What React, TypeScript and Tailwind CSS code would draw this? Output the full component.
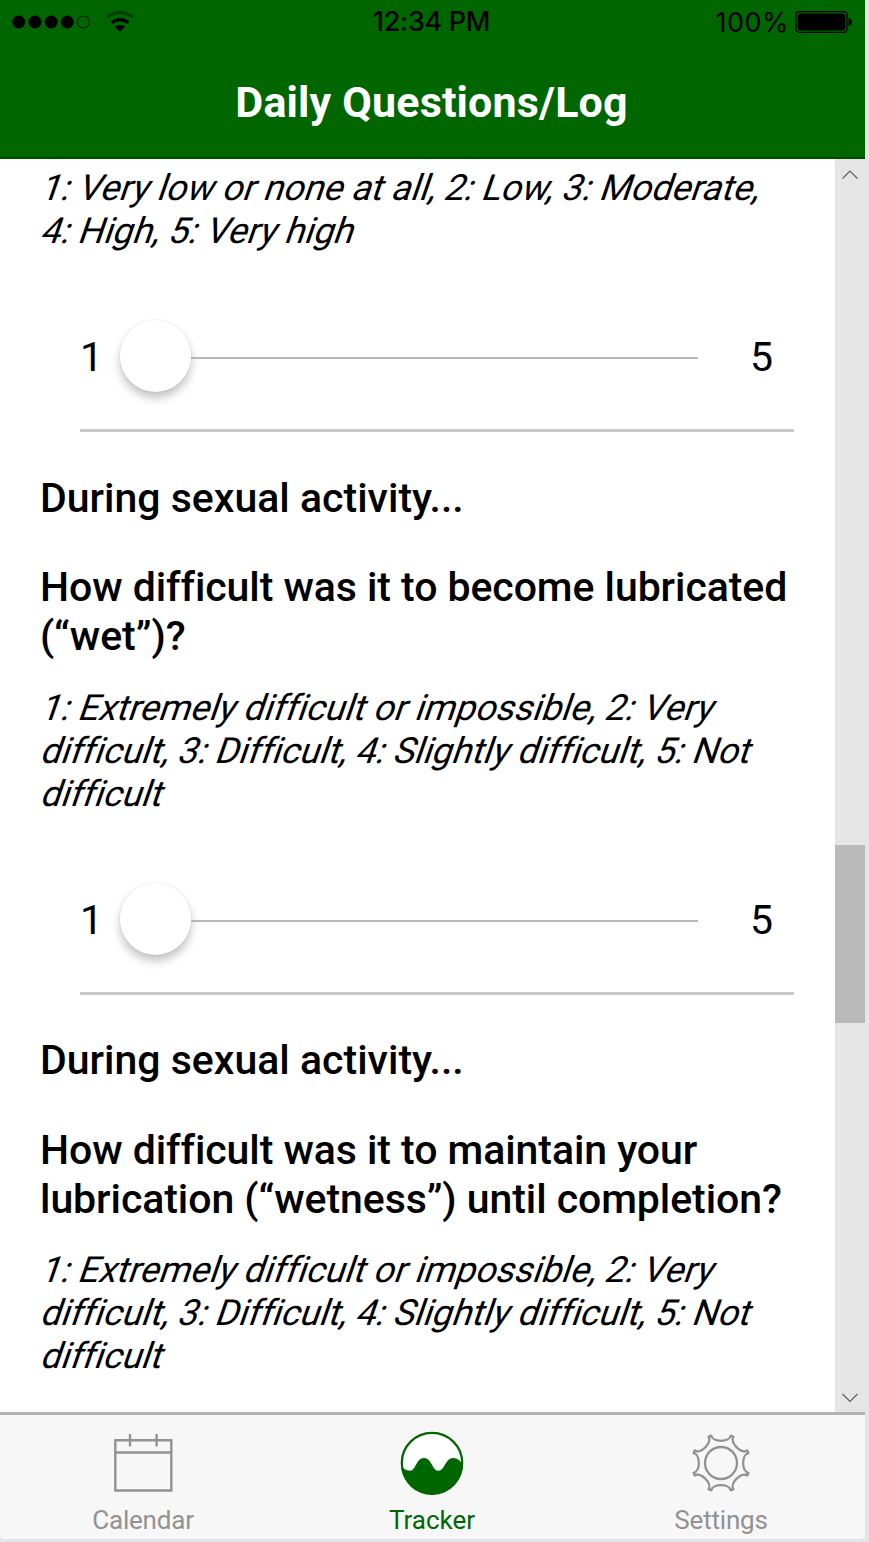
import React from 'react';

function StatusBar() {
  return (
    <div className="grid h-[44px] grid-cols-3 items-start text-black">
      <svg width="140" height="44" viewBox="0 0 140 44">
        <circle cx="18.8" cy="22" r="6.5" />
        <circle cx="35" cy="22" r="6.5" />
        <circle cx="51.2" cy="22" r="6.5" />
        <circle cx="67.3" cy="22" r="6.5" />
        <circle cx="83.4" cy="22" r="6" fill="none" stroke="#002800" strokeWidth="1.2" />
        <path d="M106.8 17.3 Q120 7.3 133.2 17.3" fill="none" stroke="#003f00" strokeWidth="3.2" />
        <path d="M111.6 22.6 Q120 16.2 128.4 22.6" fill="none" stroke="#000" strokeWidth="3.4" />
        <path d="M114.8 26.6 Q120 23.2 125.2 26.6 L120 31.8 Z" />
      </svg>
      <span className="mt-[5px] pr-[2px] text-center font-['Inter'] text-[27px] font-medium leading-[34px] tracking-[-0.3px] whitespace-nowrap">
        12:34 PM
      </span>
      <div className="flex justify-end pr-[12px]">
        <span className="mt-[6px] mr-[6px] font-['Inter'] text-[27px] leading-[34px] tracking-[0.5px]">100%</span>
        <svg width="58" height="44" viewBox="0 0 58 44">
          <rect x="1" y="11.7" width="51" height="20.6" rx="3" fill="none" stroke="#000" strokeWidth="1.2" />
          <rect x="2.7" y="13.5" width="47.6" height="17" rx="2.5" />
          <path d="M53.5 18 Q57 18.5 57 22 Q57 25.500 53.500 26 Z" />
        </svg>
      </div>
    </div>
  );
}

function Hint({ lines }: { lines: string[] }) {
  return (
    <div className="ml-[43px] text-[36px] leading-[43px] tracking-[-0.1px] [font-variant-ligatures:none]">
      {lines.map((line) => (
        <div key={line} className="w-max -skew-x-[19deg] whitespace-nowrap">{line}</div>
      ))}
    </div>
  );
}

function Scale() {
  return (
    <div className="ml-[80px] flex h-[149px] w-[714px] items-center border-b-[3px] border-[#c8c7cc] text-[41px]">
      <span className="mt-[4px] w-[40px]">1</span>
      <div className="flex w-[578px] items-center">
        <div className="h-[72px] w-[71px] shrink-0 rounded-full bg-white shadow-[0_0_0_1px_rgba(0,0,0,0.03),0_6px_10px_rgba(0,0,0,0.24)]" />
        <div className="mt-[4px] h-[2px] grow bg-[#b7b7b7]" />
      </div>
      <span className="mt-[4px] ml-[52px]">5</span>
    </div>
  );
}

function Question({ lines }: { lines: string[] }) {
  return (
    <div className="ml-[40px] text-[41px] font-medium leading-[49px] tracking-[-0.07px] [font-variant-ligatures:none]">
      <div className="pb-[40.5px] tracking-[0px]">During sexual activity...</div>
      {lines.map((line) => (
        <div key={line} className="whitespace-nowrap">{line}</div>
      ))}
    </div>
  );
}

function gearPath() {
  const turn = (x: number, y: number, k: number) => {
    const a = (k * Math.PI) / 4;
    return `${(x * Math.cos(a) - y * Math.sin(a)).toFixed(2)} ${(x * Math.sin(a) + y * Math.cos(a)).toFixed(2)}`;
  };
  let d = '';
  for (let k = 0; k < 8; k++) {
    d += `${k ? 'L' : 'M'}${turn(-9.8, -27.4, k)}`;
    d += `C${turn(-8.4, -20.4, k)} ${turn(8.4, -20.4, k)} ${turn(9.8, -27.4, k)}`;
  }
  return d + 'Z';
}

function TabBar() {
  return (
    <div className="flex h-[127px] shrink-0 rounded-b-[4px] border-t-[3px] border-[#b2b2b2] bg-[#f7f7f7] text-[26px] leading-[30px] tracking-[-0.2px] text-[#929292]">
      <div className="flex w-[286px] flex-col items-center pt-[16px]">
        <svg width="66" height="66" viewBox="0 0 66 66" fill="none" stroke="#929292" strokeWidth="2.4">
          <path d="M5.300 9.200H61.300V59.500H5.300ZM5.300 21.500H61.300M20 3V15.500M46.600 3V15.500" />
        </svg>
        <span className="mt-[8px]">Calendar</span>
      </div>
      <div className="flex w-[292px] flex-col items-center pt-[16px] text-[#006600]">
        <svg width="66" height="66" viewBox="0 0 66 66">
          <circle cx="33" cy="32" r="30.200" fill="#fff" stroke="#006600" strokeWidth="2.200" />
          <path fill="#006600" d="M2 34C4 38 7 39.700 11 39.700C17 39.700 17 27 25 27C33 27 33 39.700 39.300 39.700C46 39.700 46 27 54.300 27C59 27 60 30 64 32A31 31 0 0 1 2 34Z" />
        </svg>
        <span className="mt-[8px] tracking-[0px]">Tracker</span>
      </div>
      <div className="flex w-[286px] flex-col items-center pt-[16px]">
        <svg width="66" height="66" viewBox="-33 -32 66 66" fill="none" stroke="#929292" strokeWidth="2.300" strokeLinejoin="round">
          <path d={gearPath()} />
          <circle r="16" />
        </svg>
        <span className="mt-[8px]">Settings</span>
      </div>
    </div>
  );
}

function Chevron({ down = false }: { down?: boolean }) {
  return (
    <svg width="30" height="30" viewBox="0 0 30 30" fill="none" stroke="#606060" strokeWidth="1.2">
      <path d={down ? 'M7.500 12L15 19.500L22.500 12' : 'M7.500 19.500L15 12L22.500 19.500'} />
    </svg>
  );
}

const difficulty = [
  '1: Extremely difficult or impossible, 2: Very',
  'difficult, 3: Difficult, 4: Slightly difficult, 5: Not',
  'difficult',
];

export default function App() {
  return (
    <div className="h-[1542px] w-[869px] overflow-hidden bg-[#e5e5e7] font-['Roboto',sans-serif] text-black">
      <div className="flex h-[1539px] w-[865px] flex-col">
        <header className="h-[159px] shrink-0 border-b-2 border-[#004d00] bg-[#006600]">
          <StatusBar />
          <h1 className="mt-[33px] pr-[2px] text-center text-[43px] font-bold leading-[50px] tracking-[0.15px] text-white">Daily Questions/Log</h1>
        </header>
        <div className="flex h-[1253px] shrink-0 bg-white">
          <main className="w-[835px] pt-[8px]">
            <Hint lines={['1: Very low or none at all, 2: Low, 3: Moderate,', '4: High, 5: Very high']} />
            <div className="h-[30px]" />
            <Scale />
            <div className="h-[41.8px]" />
            <Question lines={['How difficult was it to become lubricated', '(“wet”)?']} />
            <div className="h-[25.700px]" />
            <Hint lines={difficulty} />
            <div className="h-[30px]" />
            <Scale />
            <div className="h-[41.400px]" />
            <Question lines={['How difficult was it to maintain your', 'lubrication (“wetness”) until completion?']} />
            <div className="h-[25.100px]" />
            <Hint lines={difficulty} />
          </main>
          <div className="flex w-[30px] flex-col bg-[#e5e5e5]">
            <Chevron />
            <div className="mt-[656px] h-[178px] bg-[#b9b9b9]" />
            <div className="mt-auto h-[30px]">
              <Chevron down />
            </div>
          </div>
        </div>
        <TabBar />
      </div>
    </div>
  );
}
